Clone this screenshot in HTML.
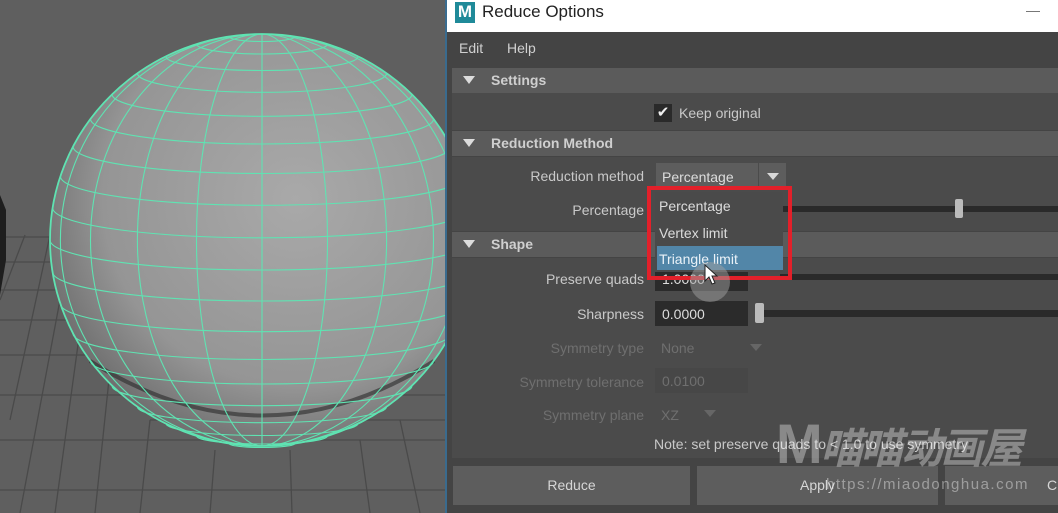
<!DOCTYPE html>
<html><head><meta charset="utf-8"><style>
*{margin:0;padding:0;box-sizing:border-box}
body{width:1058px;height:513px;overflow:hidden;position:relative;background:#5e5e5e;font-family:"Liberation Sans","Noto Sans CJK SC",sans-serif;font-size:14px;color:#c9c9c9}
.a{position:absolute;white-space:nowrap}
.hdr{position:absolute;left:452px;width:606px;height:25px;background:#5b5b5b}
.hdr .t{position:absolute;left:11px;top:8px;width:0;height:0;border-left:6px solid transparent;border-right:6px solid transparent;border-top:8px solid #dcdcdc}
.hdr .l{position:absolute;left:39px;top:4px;font-weight:bold;font-size:14px;color:#cfcfcf}
.lbl{position:absolute;right:414px;white-space:nowrap}
.dim{color:#6f6f6f}
.fld{position:absolute;height:25px;background:#2b2b2b;padding:5px 7px;color:#ddd}
.arrow{position:absolute;width:0;height:0;border-left:6px solid transparent;border-right:6px solid transparent;border-top:7px solid #d8d8d8}
.btn{position:absolute;top:466px;height:39px;background:#5d5d5d;text-align:center;line-height:39px;color:#d6d6d6}
</style></head><body>
<svg class="a" style="left:0;top:0" width="446" height="513">
<rect width="446" height="513" fill="#5f5f5f"/>
<g stroke="#4a4a4a" stroke-width="1.3" fill="none">
<path d="M0 237 H50 M0 262 H50 M0 290 H60 M0 320 H80 M0 355 H110 M0 395 H446 M0 440 H446 M0 490 H446 M150 420 H446"/>
<path d="M25 235 L0 300 M50 235 L10 420 M60 300 L20 513 M80 330 L55 513 M110 370 L95 513 M150 420 L140 513 M215 450 L210 513 M290 450 L292 513 M360 440 L370 513 M400 420 L420 513"/>
</g>
<path d="M0 195 L6 210 L6 260 L0 295Z" fill="#1e1e1e"/>
<defs><radialGradient id="g" cx="0.58" cy="0.4" r="0.65"><stop offset="0" stop-color="#a9a9a9"/><stop offset="0.7" stop-color="#959595"/><stop offset="1" stop-color="#6a6a6a"/></radialGradient></defs>
<ellipse cx="262" cy="240" rx="212" ry="206" fill="url(#g)"/>
<path d="M90 361 Q262 470 434 361" stroke="#2a2a2a" stroke-width="4" fill="none" opacity=".6"/>
<g stroke="#5fe3b2" stroke-width="1.1" fill="none">
<ellipse cx="262" cy="240" rx="212" ry="206" stroke-width="1.8"/>
<path d="M229 36.5A33 5 0 0 0 295 36.5M196.5 44A65.5 10 0 0 0 327.5 44M166 56.5A96 14 0 0 0 358 56.5M137.4 73.3A124.6 19 0 0 0 386.6 73.3M112 94.3A150 22 0 0 0 412 94.3M90.5 119A171.5 25 0 0 0 433.5 119M73 146.5A189 27 0 0 0 451 146.5M60.4 176.3A201.6 29 0 0 0 463.6 176.3M52.6 207.8A209.4 30 0 0 0 471.4 207.8M50 240A212 30 0 0 0 474 240M52.6 272A209.4 29 0 0 0 471.4 272M60.4 303.7A201.6 28 0 0 0 463.6 303.7M73 333.5A189 26 0 0 0 451 333.5M90.5 361A171.5 23 0 0 0 433.5 361M112 385.7A150 20 0 0 0 412 385.7M137.4 406.7A124.6 16 0 0 0 386.6 406.7M166 423.5A96 12 0 0 0 358 423.5M196.5 436A65.5 8 0 0 0 327.5 436M229 443.5A33 4 0 0 0 295 443.5"/>
<path d="M262 34V446M262 34A65.5 206 0 0 1 262 446M262 34A65.5 206 0 0 0 262 446M262 34A124.6 206 0 0 1 262 446M262 34A124.6 206 0 0 0 262 446M262 34A171.5 206 0 0 1 262 446M262 34A171.5 206 0 0 0 262 446M262 34A201.6 206 0 0 1 262 446M262 34A201.6 206 0 0 0 262 446"/>
</g>
</svg>
<div class="a" style="left:445px;top:0;width:613px;height:513px;background:#444;border-left:2px solid #3a6b8e"></div>
<div class="a" style="left:447px;top:0;width:611px;height:32px;background:#fff"></div>
<div class="a" style="left:455px;top:2px;width:20px;height:21px;background:#1f8a99;color:#fff;font-weight:bold;font-size:17px;text-align:center;line-height:19px">M</div>
<div class="a" style="left:482px;top:2px;font-size:17px;color:#222">Reduce Options</div>
<div class="a" style="left:1026px;top:11px;width:14px;height:1px;background:#777"></div>
<div class="a" style="left:459px;top:40px;color:#d0d0d0">Edit</div>
<div class="a" style="left:507px;top:40px;color:#d0d0d0">Help</div>
<div class="a" style="left:452px;top:93px;width:606px;height:37px;background:#4b4b4b"></div>
<div class="a" style="left:452px;top:157px;width:606px;height:74px;background:#4b4b4b"></div>
<div class="a" style="left:452px;top:258px;width:606px;height:200px;background:#4b4b4b"></div>
<div class="hdr" style="top:68px"><div class="t"></div><div class="l">Settings</div></div>
<div class="hdr" style="top:131px"><div class="t"></div><div class="l">Reduction Method</div></div>
<div class="hdr" style="top:232px"><div class="t"></div><div class="l">Shape</div></div>
<div class="a" style="left:654px;top:104px;width:18px;height:18px;background:#2a2a2a;color:#eee;font-size:15px;text-align:center;line-height:18px">✔</div>
<div class="a" style="left:679px;top:105px">Keep original</div>
<div class="lbl" style="top:168px">Reduction method</div>
<div class="a" style="left:656px;top:163px;width:102px;height:26px;background:#5d5d5d;padding:6px 6px;color:#ddd">Percentage</div>
<div class="a" style="left:759px;top:163px;width:27px;height:26px;background:#5d5d5d"></div>
<div class="arrow" style="left:767px;top:173px"></div>
<div class="lbl" style="top:202px">Percentage</div>
<div class="a" style="left:780px;top:206px;width:278px;height:6px;background:#2a2a2a"></div>
<div class="a" style="left:955px;top:199px;width:8px;height:19px;background:#bbb;border-radius:2px"></div>
<div class="lbl" style="top:271px">Preserve quads</div>
<div class="fld" style="left:655px;top:266px;width:93px">1.0000</div>
<div class="a" style="left:780px;top:274px;width:278px;height:6px;background:#2a2a2a"></div>
<div class="lbl" style="top:306px">Sharpness</div>
<div class="fld" style="left:655px;top:301px;width:93px">0.0000</div>
<div class="a" style="left:760px;top:310px;width:298px;height:7px;background:#2a2a2a"></div>
<div class="a" style="left:755px;top:303px;width:9px;height:20px;background:#bbb;border-radius:2px"></div>
<div class="lbl dim" style="top:340px">Symmetry type</div>
<div class="a dim" style="left:661px;top:340px">None</div>
<div class="arrow" style="left:750px;top:344px;border-top-color:#666"></div>
<div class="lbl dim" style="top:374px">Symmetry tolerance</div>
<div class="fld dim" style="left:655px;top:368px;width:93px;background:#474747;color:#6f6f6f">0.0100</div>
<div class="lbl dim" style="top:407px">Symmetry plane</div>
<div class="a dim" style="left:661px;top:407px">XZ</div>
<div class="arrow" style="left:704px;top:410px;border-top-color:#666"></div>
<div class="a" style="left:654px;top:436px">Note: set preserve quads to &lt; 1.0 to use symmetry</div>
<div class="btn" style="left:453px;width:237px">Reduce</div>
<div class="btn" style="left:697px;width:241px">Apply</div>
<div class="btn" style="left:945px;width:113px;text-align:left;padding-left:102px">Cl</div>
<div class="a" style="left:655px;top:192px;width:128px;height:80px;background:#4a4a4a"></div>
<div class="a" style="left:659px;top:198px;color:#dcdcdc">Percentage</div>
<div class="a" style="left:659px;top:225px;color:#dcdcdc">Vertex limit</div>
<div class="a" style="left:657px;top:246px;width:126px;height:24px;background:#5286a8;color:#eaf2f8;padding:5px 2px">Triangle limit</div>
<div class="a" style="left:647px;top:186px;width:145px;height:94px;border:4px solid #e3202a"></div>
<div class="a" style="left:690px;top:262px;width:40px;height:40px;border-radius:50%;background:rgba(160,160,160,.5)"></div>
<svg class="a" style="left:704px;top:264px" width="16" height="22"><path d="M1 1L1 17L5 13L8 20L11 19L8 12L13 12Z" fill="#fff" stroke="#222"/></svg>
<div class="a" style="left:776px;top:414px;font-size:56px;font-weight:bold;color:rgba(255,255,255,.35);letter-spacing:-2px;line-height:60px">M<span style="font-size:42px;font-style:italic">喵喵动画屋</span></div>
<div class="a" style="left:826px;top:476px;font-size:15px;color:rgba(255,255,255,.4);letter-spacing:1.5px">https://miaodonghua.com</div>
</body></html>
